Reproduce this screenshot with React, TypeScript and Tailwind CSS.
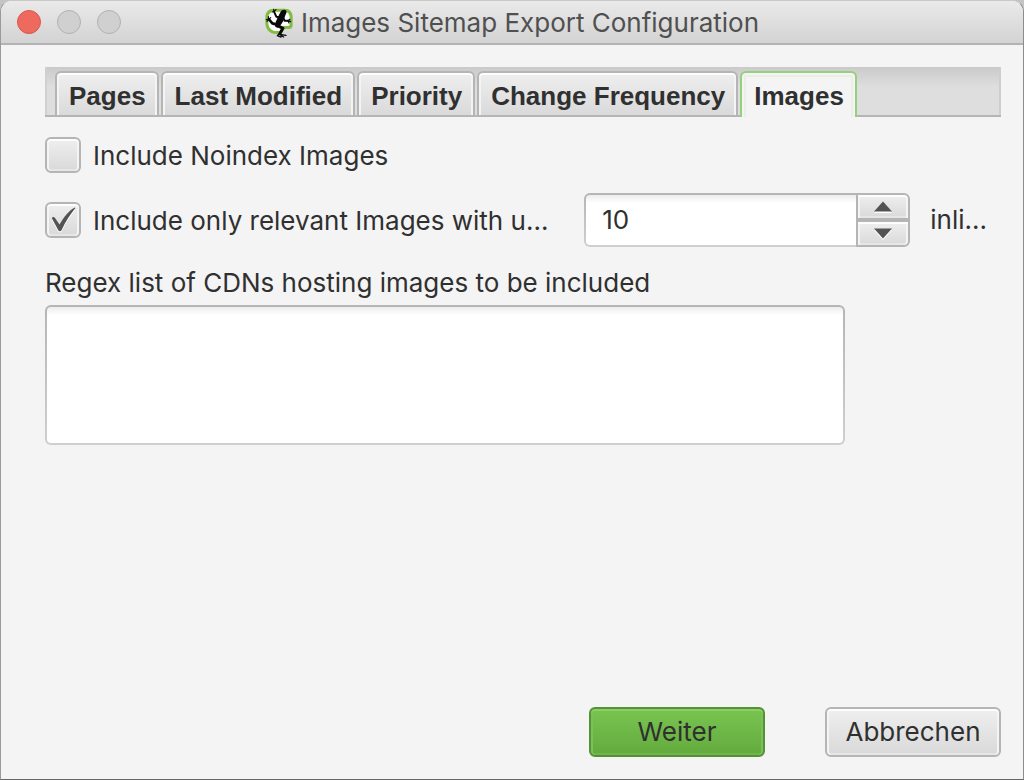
import { useState } from "react";

const tabs = ["Pages", "Last Modified", "Priority", "Change Frequency", "Images"];

const raised =
  "border-2 border-[#b5b5b5] bg-linear-to-b from-[#efefef] to-[#d9d9d9] shadow-[inset_0_2px_0_#fdfdfd,inset_2px_0_0_#f4f4f4,inset_-2px_0_0_#f4f4f4,inset_0_-2px_0_#e6e6e6]";

const field =
  "border-2 border-transparent rounded-md outline-none [background:linear-gradient(to_bottom,#ededed,#fff_8px)_padding-box,linear-gradient(to_bottom,#b5b5b5,#cfcfcf)_border-box]";

function Logo() {
  return (
    <svg viewBox="10 8 84 90" className="h-[30px] w-7" aria-hidden="true">
      <path
        d="M36 10H70C84 10 93 20 93 34V60C93 67 89 71 83 71H68L60 86H44C24 86 11 72 11 52V36C11 20 21 10 36 10Z"
        fill="#82bd42"
      />
      <path
        d="M38 19H68C78 19 84 26 84 36V56C84 60 82 62 78 62H62L54 77H44C30 77 20 67 20 52V38C20 26 27 19 38 19Z"
        fill="#fff"
      />
      <g fill="none" stroke="#0a0a0a" strokeLinecap="round" strokeLinejoin="round">
        <path d="M55 36L44 34L37 19" strokeWidth="6" />
        <path d="M32 20L37 18L36 12M38 18L43 13" strokeWidth="3.500" />
        <path d="M44 57L32 54L22 42" strokeWidth="8" />
        <path d="M14 43L21 41L20 34M22 41L27 37M21 43L16 48" strokeWidth="3.500" />
        <path d="M63 35L69 46L79 46" strokeWidth="6" />
        <path d="M78 46L85 42M79 46L87 49M79 46L82 53" strokeWidth="3.500" />
        <path d="M48 61L64 69L55 84" strokeWidth="9" />
        <path d="M54 84L47 91L58 95M54 87L73 90M56 89L66 95" strokeWidth="4" />
      </g>
      <path
        d="M57 19C61 13 70 11 74 17C77 22 71 27 70 33C68 43 62 55 52 65C46 70 38 65 40 57C43 46 50 31 57 19Z"
        fill="#0a0a0a"
      />
    </svg>
  );
}

function Check({ label, defaultChecked = false }: { label: string; defaultChecked?: boolean }) {
  return (
    <label className="flex min-w-0 items-center gap-3">
      <span className="grid shrink-0">
        <input
          type="checkbox"
          defaultChecked={defaultChecked}
          className={`peer col-start-1 row-start-1 size-9 appearance-none rounded-md ${raised}`}
        />
        <svg
          viewBox="0 0 36 36"
          className="pointer-events-none invisible col-start-1 row-start-1 size-9 peer-checked:visible"
          aria-hidden="true"
        >
          <path d="M7 18c.6-1.300 2-1.700 3-.2l4.500 6.500C19 17 24 10 29.500 7.200l1 .4C26 13 21 20.500 16.500 29.500c-.8 1.200-2.400 1.200-3.200.2z" fill="#fff" />
          <path d="M7 16.500c.3-1.500 2-2 3-.4l4.500 6.500C19 15 24 8.500 29.800 5.600l.6.500C25.500 12 21 19 16.500 28.200c-.8 1.300-2.400 1.300-3.200 0z" fill="#535353" />
        </svg>
      </span>
      <span className="pt-0.5 whitespace-nowrap">{label}</span>
    </label>
  );
}

export default function App() {
  const [active, setActive] = useState("Images");
  const [count, setCount] = useState(10);

  return (
    <div className="min-h-screen bg-[#c4c4c4] font-[Inter,'Noto_Sans',sans-serif] text-[26px] leading-8 text-[#303030]">
      <div className="flex min-h-screen flex-col overflow-hidden rounded-t-xl border border-t-[#c8c8c8] border-r-[#8c8c8c] border-b-[#666] border-l-[#9a9a9a] bg-[#f4f4f4]">
        <header className="grid h-11 grid-cols-[1fr_auto_1fr] items-center border-b-2 border-[#b3b3b3] bg-linear-to-b from-[#eaeaea] to-[#d3d3d3] px-4">
          <div className="flex gap-4">
            <button aria-label="Close" className="size-6 rounded-full border border-[#d9574e] bg-[#ee6a5f]" />
            <button aria-label="Minimize" className="size-6 rounded-full border border-[#b0b0b0] bg-[#d0d0d0]" />
            <button aria-label="Zoom" className="size-6 rounded-full border border-[#b0b0b0] bg-[#d0d0d0]" />
          </div>
          <h1 className="flex items-center gap-2 pt-0.5 text-[#505050]">
            <Logo />
            Images Sitemap Export Configuration
          </h1>
        </header>

        <main className="flex grow flex-col pt-[22px] pr-[22px] pb-[22px] pl-11">
          <div
            role="tablist"
            className="flex h-[50px] gap-0.5 bg-linear-to-b from-[#cacaca] to-[#dedede] to-40% pt-1 pl-2.5 font-['Liberation_Sans',Arial,sans-serif] text-[26px] font-bold shadow-[inset_0_-2px_0_#b5b5b5,inset_2px_0_0_#d0d0d0,inset_-2px_0_0_#cecece]"
          >
            {tabs.map((t) => (
              <button
                key={t}
                role="tab"
                aria-selected={t === active}
                onClick={() => setActive(t)}
                className={
                  t === active
                    ? "rounded-t-md border-2 border-b-0 border-[#96d07c] bg-[#f4f4f4] pt-0.5 pr-[11px] pl-3 shadow-[inset_0_2px_0_#f4f4f4,inset_2px_0_0_#f4f4f4,inset_-2px_0_0_#f4f4f4,inset_0_4px_0_#e8f0e4,inset_4px_0_0_#e8f0e4,inset_-4px_0_0_#e8f0e4]"
                    : "rounded-t-md border-2 border-[#b5b5b5] bg-linear-to-b from-[#efefef] to-[#dadada] pt-1 pr-[11px] pl-3 shadow-[inset_0_2px_0_#fdfdfd,inset_2px_0_0_#f4f4f4,inset_-2px_0_0_#f4f4f4]"
                }
              >
                {t}
              </button>
            ))}
          </div>

          <div className="mt-5 flex">
            <Check label="Include Noindex Images" />
          </div>

          <div className="mt-5 flex items-center justify-between pr-3.5">
            <Check label="Include only relevant Images with u..." defaultChecked />
            <div className="flex items-center gap-5">
              <div className="flex h-[54px] w-[326px]">
                <input
                  type="text"
                  inputMode="numeric"
                  aria-label="Inlinks"
                  value={count}
                  onChange={(e) => setCount(Number(e.target.value) || 0)}
                  className={`min-w-0 grow rounded-r-none border-r-0 px-4 ${field}`}
                />
                <div className="flex w-[54px] shrink-0 flex-col">
                  <button
                    aria-label="Increase"
                    onClick={() => setCount(count + 1)}
                    className={`flex grow items-center justify-center rounded-tr-md ${raised}`}
                  >
                    <svg viewBox="0 0 18 12" className="h-3 w-[18px]" aria-hidden="true">
                      <path d="M0 12L9 2l9 10z" fill="#fff" />
                      <path d="M0 10.500L9 .5l9 10z" fill="#535353" />
                    </svg>
                  </button>
                  <button
                    aria-label="Decrease"
                    onClick={() => setCount(count - 1)}
                    className={`flex grow items-center justify-center rounded-br-md ${raised}`}
                  >
                    <svg viewBox="0 0 18 12" className="h-3 w-[18px]" aria-hidden="true">
                      <path d="M0 2l9 10 9-10z" fill="#fff" />
                      <path d="M0 .5l9 10 9-10z" fill="#535353" />
                    </svg>
                  </button>
                </div>
              </div>
              <span>inli...</span>
            </div>
          </div>

          <label htmlFor="cdns" className="mt-5">
            Regex list of CDNs hosting images to be included
          </label>
          <textarea id="cdns" className={`mt-1.5 h-[140px] w-full max-w-[800px] resize-none px-4 py-2 ${field}`} />

          <footer className="mt-auto flex justify-end gap-[60px] pt-6">
            <button className="h-[50px] w-44 rounded-md border-2 border-[#559236] bg-linear-to-b from-[#79c551] to-[#62aa3d] shadow-[inset_0_2px_0_#89cf65,inset_2px_0_0_#7ac158,inset_-2px_0_0_#7ac158,inset_0_-2px_0_#70b44d]">
              Weiter
            </button>
            <button className={`h-[50px] w-44 rounded-md ${raised}`}>Abbrechen</button>
          </footer>
        </main>
      </div>
    </div>
  );
}
